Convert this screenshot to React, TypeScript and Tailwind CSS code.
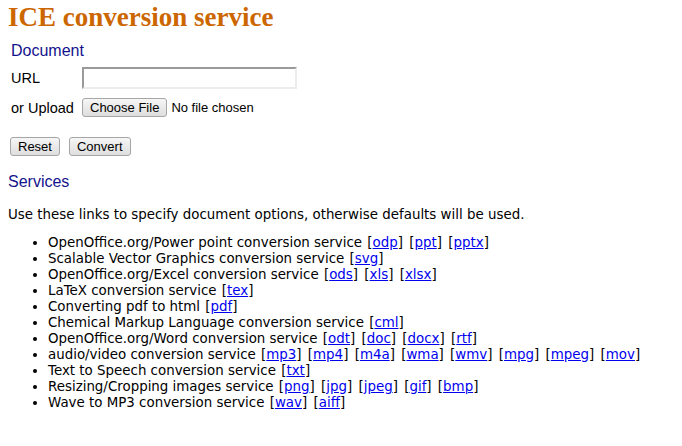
import React from "react";

type Item = { label: string; links: string[] };

const items: Item[] = [
  { label: "OpenOffice.org/Power point conversion service", links: ["odp", "ppt", "pptx"] },
  { label: "Scalable Vector Graphics conversion service", links: ["svg"] },
  { label: "OpenOffice.org/Excel conversion service", links: ["ods", "xls", "xlsx"] },
  { label: "LaTeX conversion service", links: ["tex"] },
  { label: "Converting pdf to html", links: ["pdf"] },
  { label: "Chemical Markup Language conversion service", links: ["cml"] },
  { label: "OpenOffice.org/Word conversion service", links: ["odt", "doc", "docx", "rtf"] },
  { label: "audio/video conversion service", links: ["mp3", "mp4", "m4a", "wma", "wmv", "mpg", "mpeg", "mov"] },
  { label: "Text to Speech conversion service", links: ["txt"] },
  { label: "Resizing/Cropping images service", links: ["png", "jpg", "jpeg", "gif", "bmp"] },
  { label: "Wave to MP3 conversion service", links: ["wav", "aiff"] },
];

const btn =
  "h-[19px] px-[7px] border border-[#a6a6a6] rounded-[3px] bg-gradient-to-b from-[#f6f6f6] to-[#dedede] text-[13px] leading-[17px] text-black font-['Liberation_Sans',Arial,sans-serif]";

export default function App() {
  return (
    <div className="min-h-[446px] bg-white px-2 pt-[2px] text-black">
      <h1 className="font-['Liberation_Serif','Times_New_Roman',serif] font-bold text-[27px] leading-[31px] text-[#cc6600]">
        ICE conversion service
      </h1>

      <div className="pl-[3px] font-['Liberation_Sans',Arial,sans-serif]">
        <h2 className="mt-[9px] text-[16px] leading-[18px] text-[#13138c]">Document</h2>
        <div className="mt-[7px] flex items-center">
          <span className="w-[71px] text-[14.5px] leading-[16px]">URL</span>
          <div className="h-[22px] w-[215px] border-2 border-t-[#9a9a9a] border-l-[#9a9a9a] border-b-[#ececec] border-r-[#ececec] bg-white" />
        </div>
        <div className="mt-[9px] flex items-center">
          <span className="w-[71px] text-[14.5px] leading-[16px]">or Upload</span>
          <button className={btn}>Choose File</button>
          <span className="ml-[4px] text-[13px] leading-[16px]">No file chosen</span>
        </div>
        <div className="mt-[20px] flex items-center gap-[9px] -ml-[1px]">
          <button className={btn}>Reset</button>
          <button className={btn}>Convert</button>
        </div>
      </div>

      <h2 className="mt-[17px] font-['Liberation_Sans',Arial,sans-serif] text-[16px] leading-[18px] text-[#13138c]">
        Services
      </h2>

      <div className="font-['DejaVu_Sans',Verdana,sans-serif] text-[13.4px] leading-[16px]">
        <p className="mt-[16px]">
          Use these links to specify document options, otherwise defaults will be used.
        </p>
        <ul className="mt-[12px] list-disc pl-[40px]">
          {items.map((it) => (
            <li key={it.label}>
              {it.label}
              {it.links.map((l) => (
                <React.Fragment key={l}>
                  {" "}
                  <span className="pl-[1px]">[</span>
                  <a href="#" className="text-[#0000ee] underline">{l}</a>
                  <span className="pr-[1px]">]</span>
                </React.Fragment>
              ))}
            </li>
          ))}
        </ul>
      </div>
    </div>
  );
}
